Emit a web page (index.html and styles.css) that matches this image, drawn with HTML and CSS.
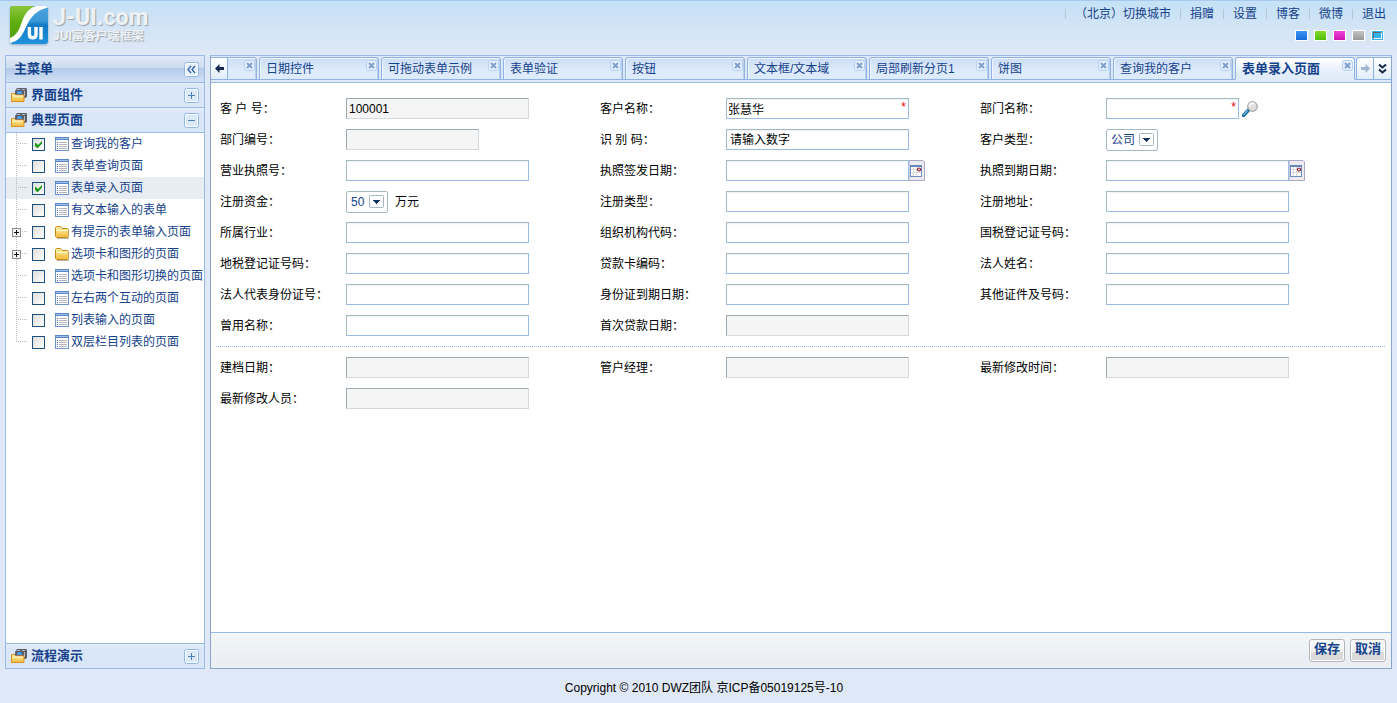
FILE: index.html
```html
<!DOCTYPE html>
<html lang="zh-CN">
<head>
<meta charset="utf-8">
<title>J-UI 富客户端框架</title>
<link rel="stylesheet" href="styles.css">
</head>
<body>
<svg class="sprite" aria-hidden="true">
  <defs>
    <linearGradient id="g-folder" x1="0" y1="0" x2="0" y2="1"><stop offset="0" stop-color="#fff3a8"/><stop offset="1" stop-color="#f0b93a"/></linearGradient>
    <linearGradient id="g-green" x1="0" y1="0" x2="0" y2="1"><stop offset="0" stop-color="#8cc63a"/><stop offset=".5" stop-color="#5fae10"/><stop offset="1" stop-color="#4f9f0c"/></linearGradient>
    <linearGradient id="g-blue" x1="0" y1="0" x2="0" y2="1"><stop offset="0" stop-color="#4ba3dc"/><stop offset=".4" stop-color="#3a97d6"/><stop offset=".5" stop-color="#1479c4"/><stop offset="1" stop-color="#1f93dc"/></linearGradient>
  </defs>
  <symbol id="i-page" viewBox="0 0 14 14">
    <rect x=".5" y=".5" width="13" height="13" fill="#fff" stroke="#6f93c9"/>
    <rect width="14" height="3" fill="#5b86c8"/><path d="M1 1.5h12" stroke="#9dbdea"/>
    <path d="M2 5.500h1M2 7.500h1M2 9.500h1M2 11.500h1" stroke="#3d72c4"/>
    <path d="M4 5.500h8M4 7.500h8M4 9.500h8M4 11.500h8" stroke="#b3b3ba"/>
  </symbol>
  <symbol id="i-folder" viewBox="0 0 14 14">
    <path d="M.5 11.500v-9l1-1h4l1.500 2h5.500l1 1v7l-1 1h-11z" fill="url(#g-folder)" stroke="#c48a1c"/>
    <path d="M1.500 5.500h11" stroke="#fffbd5"/><path d="M2 13.500h12v-8" fill="none" stroke="#b7b7b0"/>
  </symbol>
  <symbol id="i-tick" viewBox="0 0 13 13"><path d="M3 5v3l2 2h1l4-4.500V3L6 7 4 5z" fill="#1e9b1e"/></symbol>
  <symbol id="i-plus" viewBox="0 0 15 15">
    <rect x=".5" y=".5" width="14" height="14" rx="2" fill="#fff" stroke="#8fb8e8"/><rect x="2" y="2" width="11" height="11" fill="#dbeafa"/>
    <path d="M4 7.500h7M7.500 4v7" stroke="#4a7fb8"/>
  </symbol>
  <symbol id="i-minus" viewBox="0 0 15 15">
    <rect x=".5" y=".5" width="14" height="14" rx="2" fill="#fff" stroke="#8fb8e8"/><rect x="2" y="2" width="11" height="11" fill="#dbeafa"/>
    <path d="M4 7.500h7" stroke="#4a7fb8"/>
  </symbol>
  <symbol id="i-collapse" viewBox="0 0 15 15">
    <rect x=".5" y=".5" width="14" height="14" rx="2" fill="#fff" stroke="#8fb8e8"/><rect x="2" y="2" width="11" height="11" fill="#e6f0fc"/>
    <path d="M7 4L4 7.500 7 11M11 4L8 7.500 11 11" fill="none" stroke="#2f62a3" stroke-width="1.300"/>
  </symbol>
  <symbol id="i-group" viewBox="0 0 16 16">
    <path d="M4 4l2-3h9l1 1v8l-2 1H4z" fill="#5c5f66"/><path d="M6 2.500h3M11 2.500h3M13.500 4v5" stroke="#b4b9c1"/><rect x="6" y="4" width="5" height="3" fill="#2e83dc"/><path d="M7 6.500l1.500-1.500L10 6.500" fill="none" stroke="#9fd2ff"/>
    <path d="M.5 14.500V6.500h3l1 1.500h8.500v6.500z" fill="url(#g-folder)" stroke="#dc8f22"/><path d="M2 9h10" stroke="#fffbe0"/>
  </symbol>
  <symbol id="i-expand" viewBox="0 0 9 9"><rect x=".5" y=".5" width="8" height="8" fill="#f4f4f4" stroke="#8d8d8d"/><path d="M2 4.500h5M4.500 2v5" stroke="#111"/></symbol>
  <symbol id="i-close" viewBox="0 0 11 11"><rect x=".5" y=".5" width="10" height="10" rx="2" fill="#e6f0fc" stroke="#b5d0f2"/><path d="M3 3l5 5M8 3L3 8" stroke="#7f9fce" stroke-width="2"/></symbol>
  <symbol id="i-left" viewBox="0 0 9 9"><path d="M0 4.500L4.500 0v3H9v3H4.500v3z"/></symbol>
  <symbol id="i-right" viewBox="0 0 9 9"><path d="M9 4.500L4.500 0v3H0v3h4.500v3z"/></symbol>
  <symbol id="i-more" viewBox="0 0 9 10"><path d="M1 .5l3.500 3L8 .5M1 5.500l3.500 3L8 5.500" fill="none" stroke="#14284d" stroke-width="2"/></symbol>
  <symbol id="i-drop" viewBox="0 0 15 13"><rect x=".5" y=".5" width="14" height="12" rx="1" fill="#fff" stroke="#a4b9c2"/><path d="M4 5h7v1h-1v1H9v1H8v1H7V8H6V7H5V6H4z" fill="#123563"/></symbol>
  <symbol id="i-date" viewBox="0 0 16 21">
    <path d="M0 .5h14l1.500 1.500v18.500H0z" fill="#edeaf0" stroke="#aaa9c4"/>
    <rect x="1.500" y="5.500" width="11" height="11" fill="#fff" stroke="#6f8fc0"/><path d="M1 6h12" stroke="#6487bd" stroke-width="2"/>
    <path d="M2 9.500h10M2 12.500h10M4.500 7v9M7.500 7v9" stroke="#dddad6"/><circle cx="10" cy="9.500" r="1.500" fill="#fff" stroke="#8f1228" stroke-width="1.200"/>
  </symbol>
  <symbol id="i-look" viewBox="0 0 16 16">
    <path d="M1.500 14.500l5-5.500" stroke="#1d6f9c" stroke-width="3.400" stroke-linecap="round"/><path d="M1.500 14l4.500-5" stroke="#67b9dc" stroke-width="1.200"/>
    <circle cx="10.500" cy="5.500" r="4.800" fill="#e0e0e0" stroke="#8d8d8d"/><path d="M7.500 5a3 3 0 0 1 5-2" stroke="#fff" stroke-width="1.800" fill="none"/>
  </symbol>
</svg>

<header class="header">
  <a class="logo" href="#" aria-label="J-UI.com">
    <svg class="logo-mark" viewBox="0 0 38 38" aria-hidden="true">
      <rect width="38" height="38" rx="3" fill="url(#g-blue)"/>
      <path d="M3 0h22C17 4 15 11 12 19S7 31 0 33V3a3 3 0 0 1 3-3z" fill="url(#g-green)"/>
      <path d="M0 32c7-3 9-8 11.500-15S17 3 26 0h9c1.500 0 2.500.5 3 1.500C26 4 20 12 16 21S9 35 0 37z" fill="#fff"/>
      <path d="M19.400 21v7.500q0 3.300 3.300 3.300t3.300-3.300V21M31 21v12.500" fill="none" stroke="#fff" stroke-width="3.400"/>
    </svg>
    <span class="logo-text"><span class="logo-name">J-UI.com</span><span class="logo-sub">JUI富客户端框架</span></span>
  </a>
  <div class="tools">
    <nav class="nav">
      <a href="#">（北京）切换城市</a><a href="#">捐赠</a><a href="#">设置</a><a href="#">博客</a><a href="#">微博</a><a href="#">退出</a>
    </nav>
    <div class="themes">
      <button class="swatch blue" aria-label="蓝色"></button><button class="swatch green" aria-label="绿色"></button><button class="swatch purple" aria-label="紫色"></button><button class="swatch silver" aria-label="银色"></button><button class="swatch azure" aria-label="天蓝"></button>
    </div>
  </div>
</header>

<div class="main">
  <aside class="sidebar">
    <div class="side-title"><h2>主菜单</h2><button class="icon-btn" aria-label="收缩"><svg class="s15"><use href="#i-collapse"/></svg></button></div>
    <div class="group"><svg class="s16"><use href="#i-group"/></svg><h2>界面组件</h2><button class="icon-btn" aria-label="展开"><svg class="s15"><use href="#i-plus"/></svg></button></div>
    <div class="group"><svg class="s16"><use href="#i-group"/></svg><h2>典型页面</h2><button class="icon-btn" aria-label="折叠"><svg class="s15"><use href="#i-minus"/></svg></button></div>
    <ul class="tree">
      <li><span class="branch"></span><span class="check"><input type="checkbox" id="t1" checked><svg><use href="#i-tick"/></svg></span><svg class="s14"><use href="#i-page"/></svg><label for="t1">查询我的客户</label></li>
      <li><span class="branch"></span><span class="check"><input type="checkbox" id="t2"><svg><use href="#i-tick"/></svg></span><svg class="s14"><use href="#i-page"/></svg><label for="t2">表单查询页面</label></li>
      <li class="selected"><span class="branch"></span><span class="check"><input type="checkbox" id="t3" checked><svg><use href="#i-tick"/></svg></span><svg class="s14"><use href="#i-page"/></svg><label for="t3">表单录入页面</label></li>
      <li><span class="branch"></span><span class="check"><input type="checkbox" id="t4"><svg><use href="#i-tick"/></svg></span><svg class="s14"><use href="#i-page"/></svg><label for="t4">有文本输入的表单</label></li>
      <li><span class="branch"><svg class="s9"><use href="#i-expand"/></svg></span><span class="check"><input type="checkbox" id="t5"><svg><use href="#i-tick"/></svg></span><svg class="s14"><use href="#i-folder"/></svg><label for="t5">有提示的表单输入页面</label></li>
      <li><span class="branch"><svg class="s9"><use href="#i-expand"/></svg></span><span class="check"><input type="checkbox" id="t6"><svg><use href="#i-tick"/></svg></span><svg class="s14"><use href="#i-folder"/></svg><label for="t6">选项卡和图形的页面</label></li>
      <li><span class="branch"></span><span class="check"><input type="checkbox" id="t7"><svg><use href="#i-tick"/></svg></span><svg class="s14"><use href="#i-page"/></svg><label for="t7">选项卡和图形切换的页面</label></li>
      <li><span class="branch"></span><span class="check"><input type="checkbox" id="t8"><svg><use href="#i-tick"/></svg></span><svg class="s14"><use href="#i-page"/></svg><label for="t8">左右两个互动的页面</label></li>
      <li><span class="branch"></span><span class="check"><input type="checkbox" id="t9"><svg><use href="#i-tick"/></svg></span><svg class="s14"><use href="#i-page"/></svg><label for="t9">列表输入的页面</label></li>
      <li><span class="branch"></span><span class="check"><input type="checkbox" id="t10"><svg><use href="#i-tick"/></svg></span><svg class="s14"><use href="#i-page"/></svg><label for="t10">双层栏目列表的页面</label></li>
    </ul>
    <div class="group last"><svg class="s16"><use href="#i-group"/></svg><h2>流程演示</h2><button class="icon-btn" aria-label="展开"><svg class="s15"><use href="#i-plus"/></svg></button></div>
  </aside>

  <section class="content">
    <div class="tabbar">
      <button class="tab-nav" aria-label="向左"><svg class="s9"><use href="#i-left"/></svg></button>
      <div class="tabs">
        <div class="tab"><a href="#" aria-label="上一页"></a><button class="icon-btn" aria-label="关闭"><svg class="s11"><use href="#i-close"/></svg></button></div>
        <div class="tab"><a href="#">日期控件</a><button class="icon-btn" aria-label="关闭"><svg class="s11"><use href="#i-close"/></svg></button></div>
        <div class="tab"><a href="#">可拖动表单示例</a><button class="icon-btn" aria-label="关闭"><svg class="s11"><use href="#i-close"/></svg></button></div>
        <div class="tab"><a href="#">表单验证</a><button class="icon-btn" aria-label="关闭"><svg class="s11"><use href="#i-close"/></svg></button></div>
        <div class="tab"><a href="#">按钮</a><button class="icon-btn" aria-label="关闭"><svg class="s11"><use href="#i-close"/></svg></button></div>
        <div class="tab"><a href="#">文本框/文本域</a><button class="icon-btn" aria-label="关闭"><svg class="s11"><use href="#i-close"/></svg></button></div>
        <div class="tab"><a href="#">局部刷新分页1</a><button class="icon-btn" aria-label="关闭"><svg class="s11"><use href="#i-close"/></svg></button></div>
        <div class="tab"><a href="#">饼图</a><button class="icon-btn" aria-label="关闭"><svg class="s11"><use href="#i-close"/></svg></button></div>
        <div class="tab"><a href="#">查询我的客户</a><button class="icon-btn" aria-label="关闭"><svg class="s11"><use href="#i-close"/></svg></button></div>
        <div class="tab active"><a href="#">表单录入页面</a><button class="icon-btn" aria-label="关闭"><svg class="s11"><use href="#i-close"/></svg></button></div>
      </div>
      <button class="tab-nav right" aria-label="向右" disabled><svg class="s9"><use href="#i-right"/></svg></button>
      <button class="tab-nav more" aria-label="更多"><svg class="more-icon"><use href="#i-more"/></svg></button>
    </div>

    <form class="form">
      <div class="fields">
        <div class="field"><label for="f1">客 户 号：</label><input class="text" id="f1" value="100001" readonly></div>
        <div class="field"><label for="f2">客户名称：</label><span class="req"><input class="text" id="f2" value="张慧华"><i>*</i></span></div>
        <div class="field"><label for="f3">部门名称：</label><span class="req"><input class="text short" id="f3"><i>*</i></span><button class="icon-btn look" type="button" aria-label="查找"><svg class="s16"><use href="#i-look"/></svg></button></div>
        <div class="field"><label for="f4">部门编号：</label><input class="text short" id="f4" readonly></div>
        <div class="field"><label for="f5">识 别 码：</label><input class="text hint" id="f5" placeholder="请输入数字"></div>
        <div class="field"><label for="f6">客户类型：</label><span class="combo"><select id="f6"><option>公司</option><option>个人</option></select><svg><use href="#i-drop"/></svg></span></div>
        <div class="field"><label for="f7">营业执照号：</label><input class="text" id="f7"></div>
        <div class="field"><label for="f8">执照签发日期：</label><input class="text" id="f8"><button class="icon-btn" type="button" aria-label="选择"><svg class="date-icon"><use href="#i-date"/></svg></button></div>
        <div class="field"><label for="f9">执照到期日期：</label><input class="text" id="f9"><button class="icon-btn" type="button" aria-label="选择"><svg class="date-icon"><use href="#i-date"/></svg></button></div>
        <div class="field"><label for="f10">注册资金：</label><span class="combo narrow"><select id="f10"><option>50</option><option>10</option></select><svg><use href="#i-drop"/></svg></span><span class="unit">万元</span></div>
        <div class="field"><label for="f11">注册类型：</label><input class="text" id="f11"></div>
        <div class="field"><label for="f12">注册地址：</label><input class="text" id="f12"></div>
        <div class="field"><label for="f13">所属行业：</label><input class="text" id="f13"></div>
        <div class="field"><label for="f14">组织机构代码：</label><input class="text" id="f14"></div>
        <div class="field"><label for="f15">国税登记证号码：</label><input class="text" id="f15"></div>
        <div class="field"><label for="f16">地税登记证号码：</label><input class="text" id="f16"></div>
        <div class="field"><label for="f17">贷款卡编码：</label><input class="text" id="f17"></div>
        <div class="field"><label for="f18">法人姓名：</label><input class="text" id="f18"></div>
        <div class="field"><label for="f19">法人代表身份证号：</label><input class="text" id="f19"></div>
        <div class="field"><label for="f20">身份证到期日期：</label><input class="text" id="f20"></div>
        <div class="field"><label for="f21">其他证件及号码：</label><input class="text" id="f21"></div>
        <div class="field"><label for="f22">曾用名称：</label><input class="text" id="f22"></div>
        <div class="field"><label for="f23">首次贷款日期：</label><input class="text" id="f23" readonly></div>
      </div>
      <hr class="divider">
      <div class="fields">
        <div class="field"><label for="f24">建档日期：</label><input class="text" id="f24" readonly></div>
        <div class="field"><label for="f25">管户经理：</label><input class="text" id="f25" readonly></div>
        <div class="field"><label for="f26">最新修改时间：</label><input class="text" id="f26" readonly></div>
        <div class="field"><label for="f27">最新修改人员：</label><input class="text" id="f27" readonly></div>
      </div>
    </form>
    <div class="form-bar"><button class="btn">保存</button><button class="btn">取消</button></div>
  </section>
</div>

<footer class="footer">Copyright © 2010 DWZ团队 京ICP备05019125号-10</footer>
</body>
</html>
```
FILE: styles.css
```css
* { box-sizing: border-box; }
body {
  margin: 0;
  min-height: 100vh;
  display: flex;
  flex-direction: column;
  background: #dfe8f6;
  color: #000;
  font: 12px/18px "Liberation Sans", "Noto Sans CJK SC", sans-serif;
}
a { color: #15428b; text-decoration: none; }
h2 { margin: 0; font-size: 13px; line-height: 18px; color: #15428b; }
button, input, select { font: inherit; margin: 0; }
svg { display: block; flex: none; }
.sprite { position: absolute; width: 0; height: 0; }
.s9 { width: 9px; height: 9px; }
.s11 { width: 11px; height: 11px; }
.s14 { width: 14px; height: 14px; }
.s15 { width: 15px; height: 15px; }
.s16 { width: 16px; height: 16px; }
.icon-btn { padding: 0; border: 0; background: none; flex: none; }

/* header */
.header {
  height: 55px;
  display: flex;
  justify-content: space-between;
  padding: 4px 2px 0 10px;
  border-top: 1px solid #a9c9ee;
  background: linear-gradient(#c5e1f6, #dfe8f6);
}
.logo { display: flex; gap: 5px; padding-top: 1px; }
.logo-mark { width: 38px; height: 38px; filter: drop-shadow(0 1px 1px #8fa9c0); }
.logo-text { display: flex; flex-direction: column; color: #eef2f5; text-shadow: 1px 1px 1px #98a1a8; }
.logo-name { font: bold 23px/23px Roboto, sans-serif; }
.logo-sub { font-weight: bold; font-size: 12px; line-height: 14px; }
.tools { display: flex; flex-direction: column; align-items: flex-end; gap: 7px; }
.nav { display: flex; }
.nav a { padding: 0 9px 0 10px; background: linear-gradient(#b3c7d9, #b3c7d9) 0 4px / 1px 10px no-repeat; }
.themes { display: flex; gap: 6px; padding-right: 11px; }
.swatch { width: 13px; height: 11px; padding: 0; border: 1px solid #fff; }
.blue { background: linear-gradient(#3b93f4, #146ddb); }
.green { background: linear-gradient(#84dc28, #52bd0c); }
.purple { background: linear-gradient(#ee44d8, #cf17b7); }
.silver { background: linear-gradient(#c3c3c3, #989898); }
.azure { background: #34b4ee; display: grid; place-items: center; }
.azure::after { content: ""; width: 7px; height: 5px; border: 1px solid #f0f0e8; border-top-color: #666; border-left-color: #666; }

/* frame */
.main { flex: 1; display: flex; gap: 5px; padding: 0 5px; min-height: 0; }
.sidebar { width: 200px; flex: none; display: flex; flex-direction: column; border: 1px solid #99bbe8; background: #fff; }
.side-title {
  height: 27px; display: flex; align-items: center; justify-content: space-between;
  padding: 0 5px 0 8px; border-bottom: 1px solid #99bbe8;
  background: linear-gradient(#e0eaf8, #cddcf0 12px, #b3caea 12px, #d2e0f4);
}
.group {
  height: 25px; display: flex; align-items: center; gap: 4px;
  padding: 0 5px; border-bottom: 1px solid #99bbe8;
  background: linear-gradient(#e6effa, #d9e6f8 5px);
}
.group h2 { flex: 1; }
.group.last { border-top: 1px solid #99bbe8; border-bottom: 0; }
.tree { flex: 1; margin: 0; padding: 0; list-style: none; color: #15428b; }
.tree li { height: 22px; display: flex; align-items: center; padding-left: 6px; }
.tree li.selected { background: #e8edf4; }
.tree label { white-space: nowrap; padding-left: 2px; }
.branch {
  width: 20px; height: 22px; display: flex; align-items: center;
  background:
    repeating-linear-gradient(90deg, #b9b9b9 0 1px, transparent 1px 2px) 4px 10px / 12px 1px no-repeat,
    repeating-linear-gradient(#b9b9b9 0 1px, transparent 1px 2px) 4px 0 / 1px 100% no-repeat;
}
.tree li:last-child .branch { background-size: 12px 1px, 1px 11px; }
.check { display: grid; width: 13px; height: 13px; margin-right: 10px; }
.check input, .check svg { grid-area: 1 / 1; width: 13px; height: 13px; }
.check input { appearance: none; border: 1px solid #1c5180; background: linear-gradient(135deg, #dcdcd7, #fff); }
.check svg { visibility: hidden; pointer-events: none; }
.check input:checked + svg { visibility: visible; }

.content { flex: 1; min-width: 0; display: flex; flex-direction: column; border: 1px solid #8aa5cb; border-top-color: #99bbe8; background: #fff; }

/* tabs */
.tabbar { height: 27px; display: flex; padding-top: 1px; border-bottom: 1px solid #99bbe8; background: linear-gradient(#8db2e3, #8db2e3) 0 23px / 100% 1px no-repeat #dfe8f6; }
.tabs { flex: 1; min-width: 0; display: flex; justify-content: flex-end; gap: 2px; overflow: hidden; padding-right: 1px; }
.tab {
  width: 120px; height: 23px; flex: none; display: flex; justify-content: space-between; align-items: flex-start;
  padding: 2px 1px 0 6px; border: 1px solid #8db2e3; border-radius: 3px 3px 0 0;
  background: linear-gradient(#cbdcf5, #deebfc 60%); box-shadow: inset 1px 1px #edf4fd, inset -1px 0 #b9cfee;
}
.tab.active { border-bottom-color: #e1ecfb; background: linear-gradient(#fff, #e1ecfb 80%); font-weight: bold; font-size: 13px; box-shadow: none; }
.tab-nav { width: 17px; height: 23px; flex: none; display: grid; place-items: center; padding: 0; border: 1px solid #8db2e3; border-left-width: 0; background: linear-gradient(#fff, #e1edfb); fill: #14284d; }
.tab-nav.right { fill: #9fb6d0; border-left-width: 1px; border-right-width: 0; border-radius: 3px 0 0 0; }
.tab-nav.more { width: 18px; border-left-width: 1px; border-right-width: 0; }
.more-icon { width: 9px; height: 10px; }

/* form */
.form { flex: 1; padding: 10px 5px; }
.fields { display: grid; grid-template-columns: repeat(auto-fill, 380px); }
.field { height: 31px; display: flex; align-items: center; }
.field label { width: 130px; padding-left: 4px; flex: none; white-space: pre; }
.text {
  width: 183px; height: 21px; padding: 1px; color: #000; outline: 0; border-radius: 0;
  border: 1px solid #99bbe8; border-top-color: #a2bac0; border-left-color: #a2bac0;
  background: linear-gradient(#f0f0f0, #fff 2px);
}
.text[readonly] { padding-left: 2px; background: #f5f5f5; border-color: #9ca9b1 #d6d9dc #d6d9dc #9ca9b1; }
.text.short { width: 133px; }
.text.hint { padding-left: 3px; }
.text::placeholder { color: #000; opacity: 1; }
.req { display: grid; grid-template-columns: auto; }
.req .text, .req i { grid-area: 1 / 1; }
.req i { justify-self: end; padding-right: 3px; color: #e00; font-style: normal; pointer-events: none; }
.look { margin-left: 3px; }
.date-icon { width: 16px; height: 21px; }
.combo { display: grid; width: 52px; height: 22px; }
.combo.narrow { width: 42px; }
.combo select, .combo svg { grid-area: 1 / 1; }
.combo select { appearance: none; width: 100%; padding: 0 0 0 4px; border: 1px solid #a2bac0; border-radius: 2px; background: #fff; color: #15428b; }
.combo svg { width: 15px; height: 13px; justify-self: end; align-self: center; margin-right: 4px; pointer-events: none; }
.unit { padding-left: 7px; }
.divider { margin: 5px 0; border: 0; height: 1px; background: repeating-linear-gradient(90deg, #99bbe8 0 1px, transparent 1px 2px); }
.form-bar { height: 36px; display: flex; justify-content: flex-end; gap: 5px; padding: 6px 5px 0 0; border-top: 1px solid #99bbe8; background: linear-gradient(#f1f6f6, #e9edf4); }
.btn { width: 36px; height: 23px; padding: 0 0 4px; border: 1px solid #b5b5b5; border-radius: 3px; background: linear-gradient(#fafafa, #efefef 12px, #dadada 12px, #dadada); box-shadow: inset 0 0 0 1px #fff; color: #15428b; font-weight: bold; font-size: 13px; line-height: 16px; }
.footer { padding: 10px 0 6px 11px; text-align: center; }
```
